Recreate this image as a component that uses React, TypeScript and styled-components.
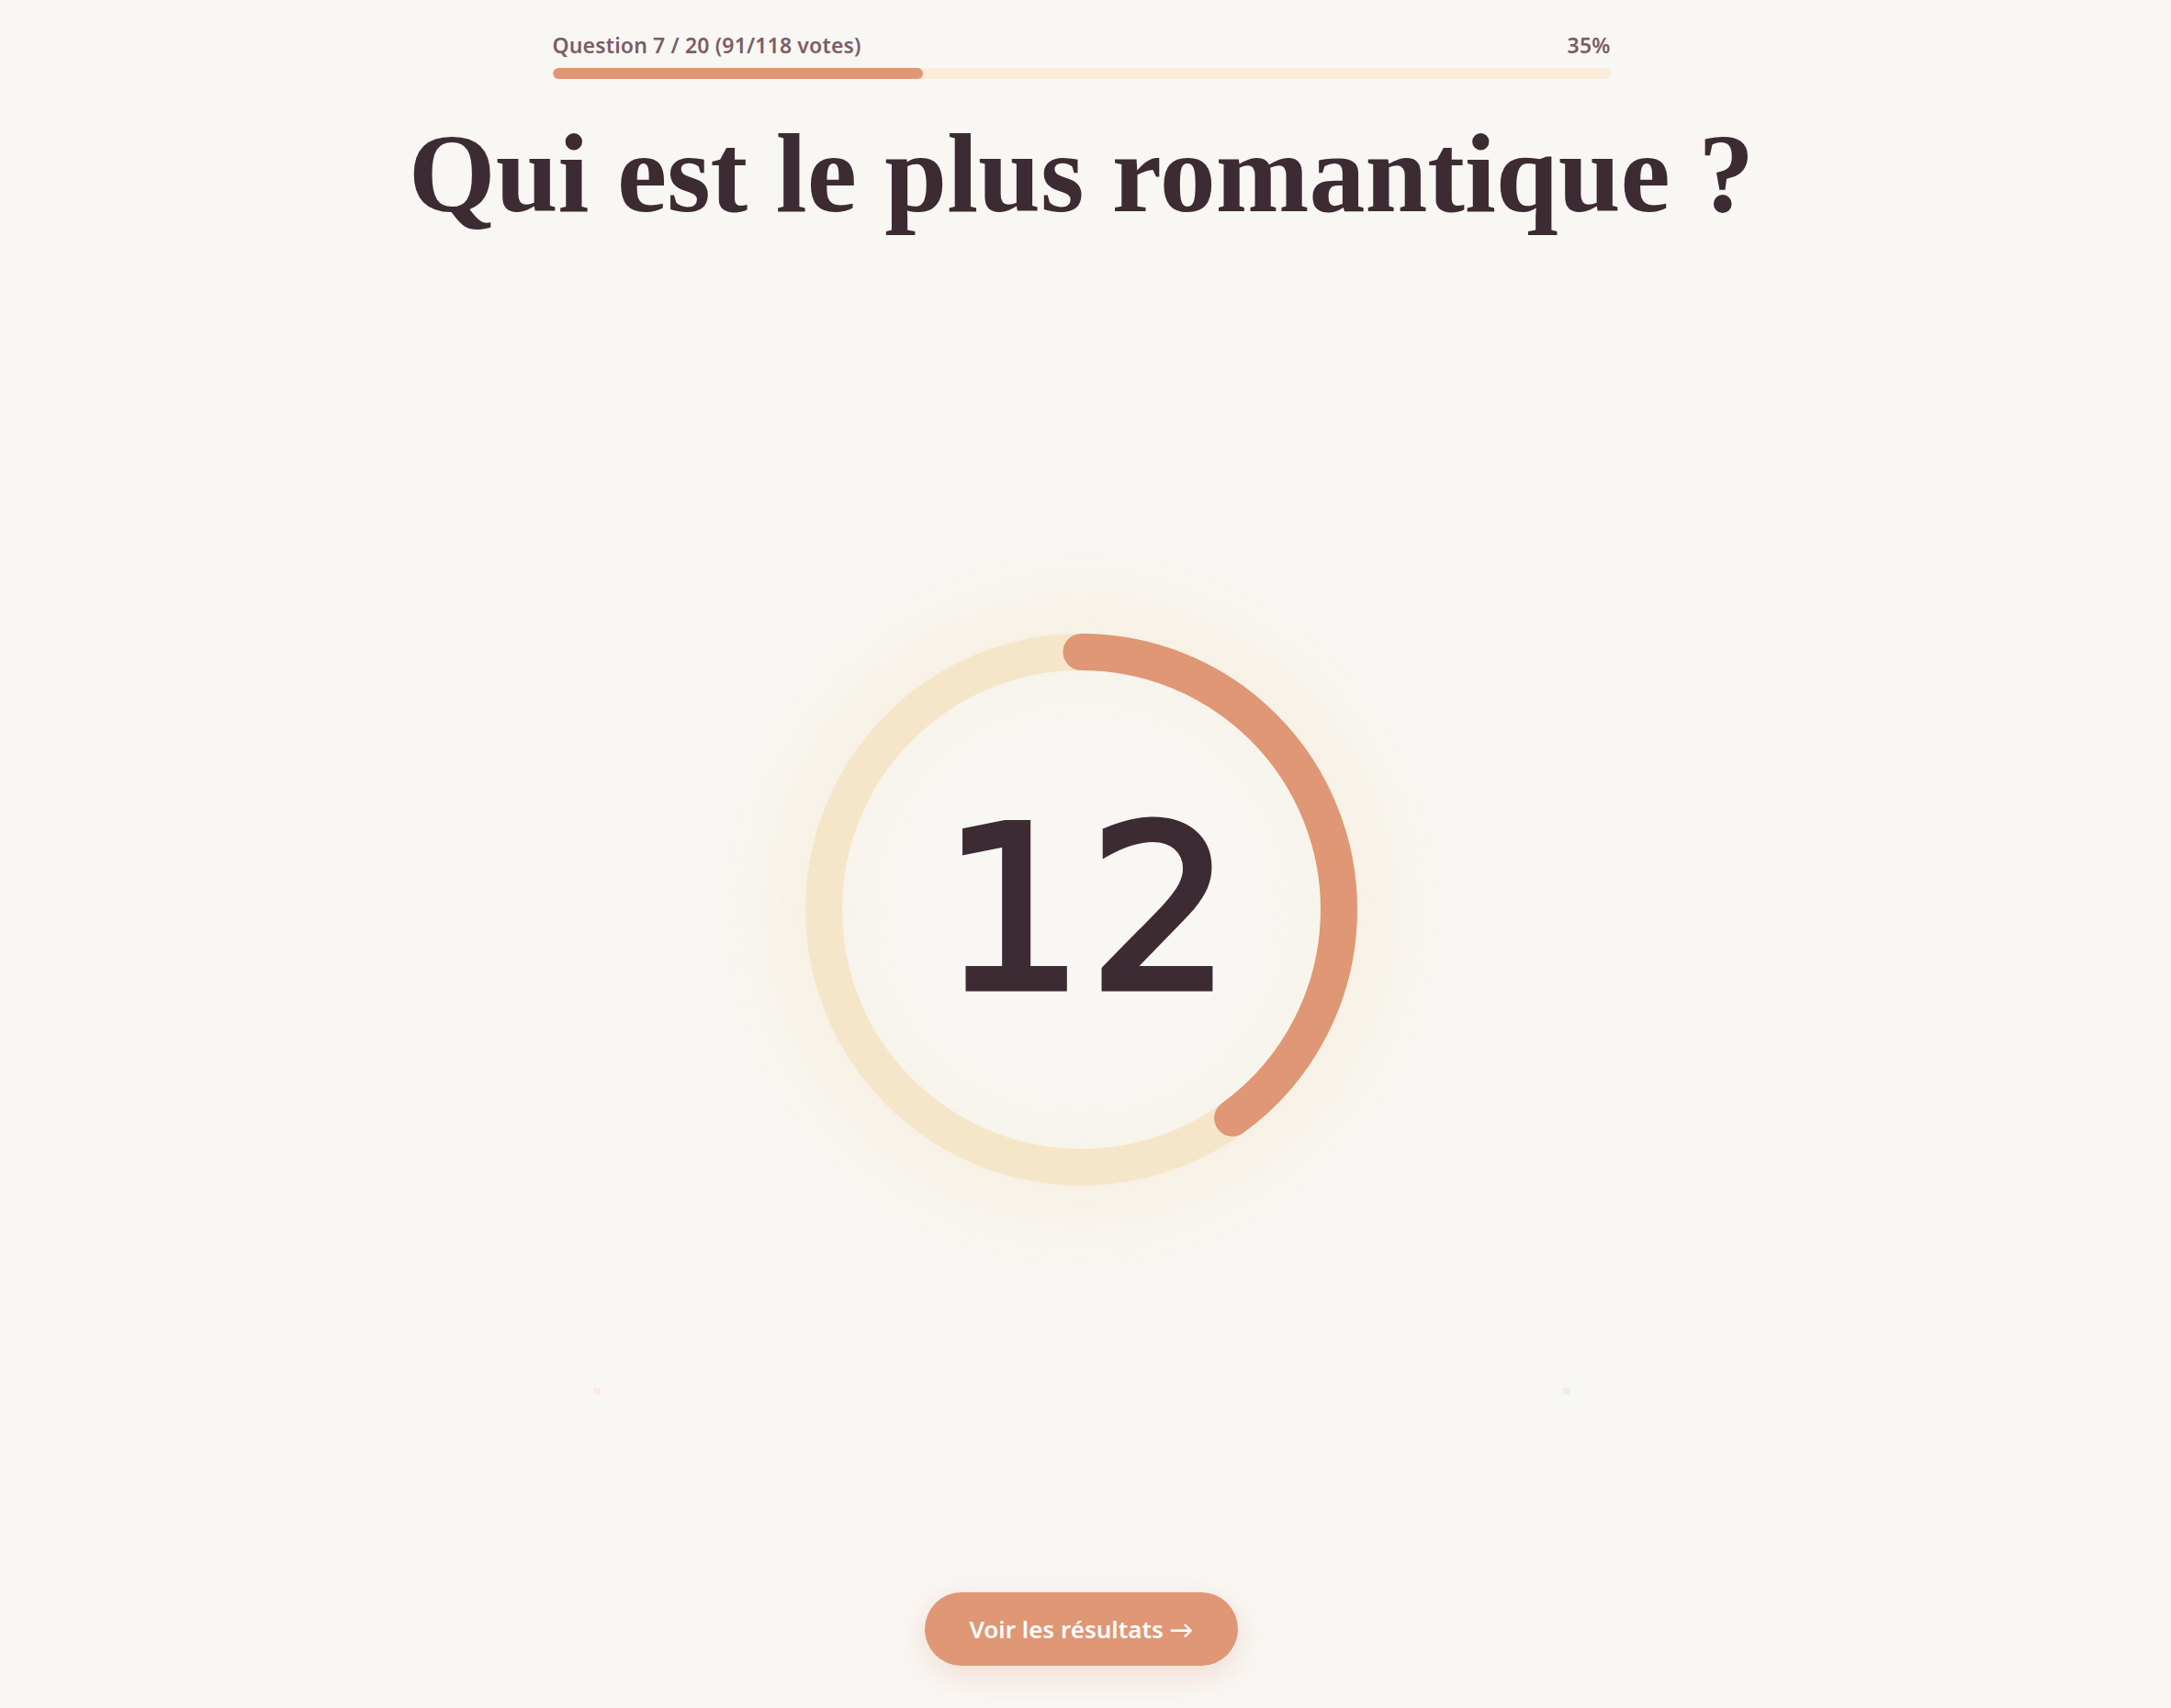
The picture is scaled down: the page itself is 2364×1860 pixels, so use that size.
import React from "react";
import styled, { createGlobalStyle } from "styled-components";

const GlobalStyle = createGlobalStyle`
  html, body {
    margin: 0;
    padding: 0;
    background: #f9f7f4;
  }
  body {
    font-family: "Noto Sans", "Lato", sans-serif;
  }
  * { box-sizing: border-box; }
`;

const Page = styled.main`
  position: relative;
  min-height: 100vh;
  display: flex;
  flex-direction: column;
  align-items: center;
  padding: 33px 9px 46px 0;
  background: #f9f7f4;
  overflow: hidden;
`;

const Header = styled.header`
  width: 1152px;
  display: flex;
  flex-direction: column;
  gap: 9px;
`;

const LabelRow = styled.div`
  display: flex;
  justify-content: space-between;
  align-items: baseline;
  font-family: "Noto Sans", "Lato", sans-serif;
  font-weight: 600;
  font-size: 23px;
  line-height: 32px;
  letter-spacing: 0.15px;
  color: #7b5d66;
`;

const Track = styled.div`
  height: 12px;
  border-radius: 999px;
  background: #faecd9;
  overflow: hidden;
`;

const Fill = styled.div`
  height: 100%;
  border-radius: 999px;
  background: #df9775;
`;

const Title = styled.h1`
  margin: 30px 0 0;
  font-family: "Liberation Serif", "Times New Roman", serif;
  font-weight: 700;
  font-size: 122px;
  line-height: 1.2;
  color: #3d2b33;
  text-align: center;
`;

const Stage = styled.section`
  flex: 1;
  display: flex;
  align-items: center;
  justify-content: center;
  padding-bottom: 15px;
`;

const Timer = styled.div`
  position: relative;
  width: 601px;
  height: 601px;
  border-radius: 50%;
  display: flex;
  align-items: center;
  justify-content: center;
  box-shadow: 0 0 110px 20px rgba(243, 226, 192, 0.45),
    inset 0 0 120px 14px rgba(243, 226, 192, 0.38);
`;

const Ring = styled.svg`
  position: absolute;
  inset: 0;
  width: 100%;
  height: 100%;
`;

const Count = styled.span`
  position: relative;
  font-family: "DejaVu Sans", "Noto Sans", sans-serif;
  font-weight: 400;
  font-size: 246px;
  line-height: 1;
  color: #3d2b33;
  -webkit-text-stroke: 7px #3d2b33;
  paint-order: stroke fill;
  letter-spacing: 4px;
  margin-top: 0;
  margin-left: 15px;
`;

const Spark = styled.span<{ $color: string }>`
  position: absolute;
  width: 8px;
  height: 8px;
  background: ${(p) => p.$color};
`;

const Button = styled.button`
  height: 80px;
  padding: 0 48px;
  border: none;
  border-radius: 40px;
  background: #df9775;
  color: #ffffff;
  font-family: "Noto Sans", "Lato", sans-serif;
  font-weight: 600;
  font-size: 26px;
  cursor: pointer;
  box-shadow: 0 10px 36px rgba(223, 151, 117, 0.28);
`;

const SIZE = 601;
const STROKE = 40;
const R = (SIZE - STROKE) / 2;
const C = 2 * Math.PI * R;

export default function App() {
  const remaining = 12;
  const total = 30;
  const frac = remaining / total;
  const progress = 0.35;

  return (
    <>
      <GlobalStyle />
      <Page>
        <Header>
          <LabelRow>
            <span>Question 7 / 20 (91/118 votes)</span>
            <span>35%</span>
          </LabelRow>
          <Track>
            <Fill style={{ width: `${progress * 100}%` }} />
          </Track>
        </Header>
        <Title>Qui est le plus romantique&nbsp;?</Title>
        <Stage>
          <Timer>
            <Ring viewBox={`0 0 ${SIZE} ${SIZE}`}>
              <circle
                cx={SIZE / 2}
                cy={SIZE / 2}
                r={R}
                fill="none"
                stroke="#f6e6c9"
                strokeWidth={STROKE}
              />
              <circle
                cx={SIZE / 2}
                cy={SIZE / 2}
                r={R}
                fill="none"
                stroke="#df9775"
                strokeWidth={STROKE}
                strokeLinecap="round"
                strokeDasharray={`${C * frac} ${C}`}
                transform={`rotate(-90 ${SIZE / 2} ${SIZE / 2})`}
              />
            </Ring>
            <Count>{remaining}</Count>
          </Timer>
        </Stage>
        <Button>Voir les résultats →</Button>
        <Spark $color="#fcebe0" style={{ left: 646, top: 1511 }} />
        <Spark $color="#e9eef3" style={{ left: 1702, top: 1511 }} />
      </Page>
    </>
  );
}
